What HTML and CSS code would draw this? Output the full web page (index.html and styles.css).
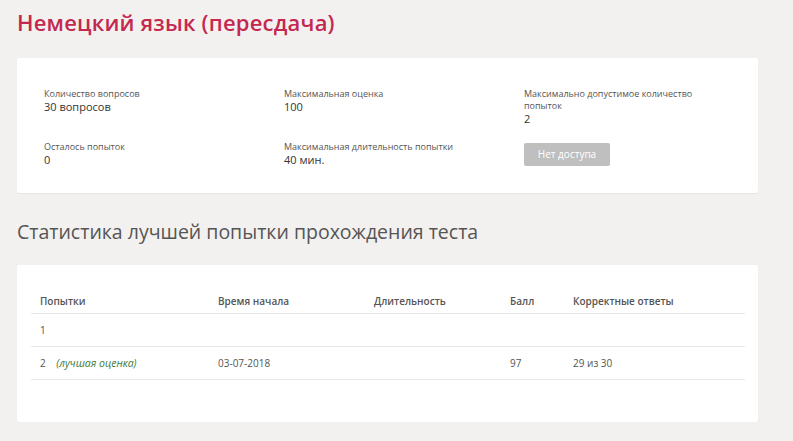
FILE: index.html
```html
<!DOCTYPE html>
<html lang="ru">
<head>
<meta charset="utf-8">
<link rel="stylesheet" href="styles.css">
</head>
<body>
<div class="page">
  <h1 class="title">Немецкий язык (пересдача)</h1>
  <section class="card info">
    <div class="info-grid">
      <div class="item">
        <div class="label">Количество вопросов</div>
        <div class="value">30 вопросов</div>
      </div>
      <div class="item">
        <div class="label">Максимальная оценка</div>
        <div class="value">100</div>
      </div>
      <div class="item">
        <div class="label">Максимально допустимое количество попыток</div>
        <div class="value">2</div>
      </div>
      <div class="item">
        <div class="label">Осталось попыток</div>
        <div class="value">0</div>
      </div>
      <div class="item">
        <div class="label">Максимальная длительность попытки</div>
        <div class="value">40 мин.</div>
      </div>
      <div class="item">
        <button class="btn" disabled>Нет доступа</button>
      </div>
    </div>
  </section>
  <h2 class="subtitle">Статистика лучшей попытки прохождения теста</h2>
  <section class="card stats">
    <table class="table">
      <thead>
        <tr>
          <th class="c1">Попытки</th>
          <th class="c2">Время начала</th>
          <th class="c3">Длительность</th>
          <th class="c4">Балл</th>
          <th class="c5">Корректные ответы</th>
        </tr>
      </thead>
      <tbody>
        <tr>
          <td>1</td><td></td><td></td><td></td><td></td>
        </tr>
        <tr>
          <td>2 <span class="best">(лучшая оценка)</span></td>
          <td>03-07-2018</td>
          <td></td>
          <td>97</td>
          <td>29 из 30</td>
        </tr>
      </tbody>
    </table>
  </section>
</div>
</body>
</html>
```

FILE: styles.css
```css
html, body {
  margin: 0;
  padding: 0;
}
body {
  background: #f2f1ef;
  font-family: "Open Sans", "DejaVu Sans", sans-serif;
  color: #444;
}
.page {
  padding: 8px 35px 0 17px;
}
.title {
  margin: 0;
  font-size: 22px;
  font-weight: 600;
  color: #c4284f;
  line-height: 28px;
  letter-spacing: 0.2px;
}
.card {
  background: #fff;
  border-radius: 2px;
  box-shadow: 0 1px 1px rgba(0,0,0,0.05);
}
.info {
  margin-top: 22px;
  height: 135px;
  box-sizing: border-box;
  padding: 30px 27px 0 27px;
}
.info-grid {
  display: grid;
  grid-template-columns: 240px 240px 1fr;
  row-gap: 15px;
}
.item {
  min-height: 38px;
}
.label {
  font-size: 9px;
  line-height: 12px;
  color: #555;
  max-width: 180px;
}
.value {
  font-size: 11px;
  line-height: 13px;
  color: #333;
}
.btn {
  margin-top: 0;
  width: 86px;
  height: 23px;
  border: none;
  border-radius: 2px;
  background: #bfbfbf;
  color: #fff;
  font-family: "Open Sans", "DejaVu Sans", sans-serif;
  font-size: 10px;
  padding: 0;
}
.subtitle {
  margin: 26px 0 0 0;
  font-size: 19.5px;
  font-weight: 400;
  color: #555;
  line-height: 26px;
}
.stats {
  margin-top: 20px;
  height: 157px;
  box-sizing: border-box;
  padding: 24px 13px 0 14px;
}
.table {
  width: 100%;
  border-collapse: collapse;
  font-size: 10px;
}
.table th {
  text-align: left;
  font-weight: 600;
  color: #555;
  height: 24px;
  padding: 0 0 0 9px;
  border-bottom: 1px solid #e8e8e8;
}
.table td {
  height: 32px;
  padding: 0 0 0 9px;
  color: #555;
  border-bottom: 1px solid #e8e8e8;
}
.c1 { width: 169px; }
.c2 { width: 147px; }
.c3 { width: 127px; }
.c4 { width: 54px; }
.best {
  margin-left: 8px;
  font-style: italic;
  color: #3d7a3d;
  font-size: 10.5px;
}
```
